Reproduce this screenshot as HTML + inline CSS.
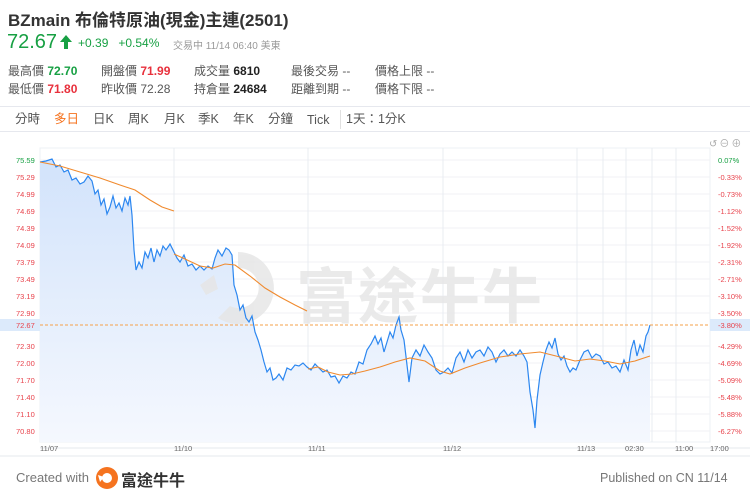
<!DOCTYPE html>
<html><head><meta charset="utf-8"><style>
body{margin:0;width:750px;height:499px;background:#fff;font-family:"Liberation Sans","Noto Sans CJK TC",sans-serif;position:relative;overflow:hidden;color:#333}
.a{position:absolute;white-space:nowrap}
.st{font-size:12px;color:#555}
.st b{font-weight:bold;color:#222}
.g{color:#17a043!important}.r{color:#e8303c!important}
.tab{font-size:12.5px;color:#555;top:110px;line-height:18px}
.yl{position:absolute;left:16px;font-size:7.5px;color:#e8434c}
.yr{position:absolute;left:718px;font-size:7.5px;color:#e8434c}
.xl{position:absolute;top:444px;font-size:7.5px;color:#666}
</style></head><body>
<div class="a" style="left:8px;top:6px;font-size:17px;font-weight:bold;color:#333">BZmain 布倫特原油(現金)主連(2501)</div>
<div class="a" style="left:7px;top:31px;font-size:20px;color:#17a043">72.67</div>
<svg class="a" style="left:60px;top:35px" width="12" height="14"><path d="M6 0 L12 7 H8 V14 H4 V7 H0Z" fill="#17a043"/></svg>
<div class="a" style="left:78px;top:36px;font-size:12px;color:#17a043">+0.39&nbsp;&nbsp; +0.54%</div>
<div class="a" style="left:173px;top:37px;font-size:10px;color:#999">交易中 11/14 06:40 美東</div>
<div class="a st" style="left:8px;top:62px">最高價 <b class="g">72.70</b></div>
<div class="a st" style="left:8px;top:80px">最低價 <b class="r">71.80</b></div>
<div class="a st" style="left:101px;top:62px">開盤價 <b class="r">71.99</b></div>
<div class="a st" style="left:101px;top:80px">昨收價 <b style="color:#555;font-weight:normal">72.28</b></div>
<div class="a st" style="left:194px;top:62px">成交量 <b>6810</b></div>
<div class="a st" style="left:194px;top:80px">持倉量 <b>24684</b></div>
<div class="a st" style="left:291px;top:62px">最後交易 --</div>
<div class="a st" style="left:291px;top:80px">距離到期 --</div>
<div class="a st" style="left:375px;top:62px">價格上限 --</div>
<div class="a st" style="left:375px;top:80px">價格下限 --</div>
<div class="a" style="left:0;top:106px;width:750px;height:1px;background:#e6e8ee"></div>
<div class="a" style="left:0;top:131px;width:750px;height:1px;background:#e6e8ee"></div>
<div class="a tab" style="left:15px">分時</div>
<div class="a tab" style="left:54px;color:#f5731f">多日</div>
<div class="a tab" style="left:93px">日K</div>
<div class="a tab" style="left:128px">周K</div>
<div class="a tab" style="left:164px">月K</div>
<div class="a tab" style="left:198px">季K</div>
<div class="a tab" style="left:233px">年K</div>
<div class="a tab" style="left:268px">分鐘</div>
<div class="a tab" style="left:307px;top:111px">Tick</div>
<div class="a" style="left:340px;top:110px;width:1px;height:19px;background:#e0e0e0"></div>
<div class="a tab" style="left:346px">1天：1分K</div>
<div class="a" style="left:709px;top:135px;font-size:10px;color:#aaa;letter-spacing:2px">↺⊖⊕</div>

<svg class="a" style="left:0;top:0" width="750" height="499">
<defs><linearGradient id="gf" x1="0" y1="0" x2="0" y2="1"><stop offset="0" stop-color="#d2e3fb"/><stop offset="1" stop-color="#f5f8fe"/></linearGradient></defs>
<rect x="40" y="148" width="670" height="294" fill="none" stroke="#edf0f4"/>
<g stroke="#f0f2f5" stroke-width="1">
<path d="M40 160H710M40 177H710M40 194H710M40 211H710M40 228H710M40 245H710M40 262H710M40 279H710M40 296H710M40 313H710M40 346H710M40 363H710M40 380H710M40 397H710M40 414H710M40 431H710"/>
<path d="M174 148V442M308 148V442M443 148V442M577 148V442M603 148V442M626 148V442M652 148V442M676 148V442" stroke="#e8ecf1"/>
</g>
<path d="M40 162L46 161L52 159L56 167L60 165L64 172L68 170L72 180L76 178L80 184L84 182L88 176L92 181L95 194L98 190L101 205L104 199L107 214L110 207L113 196L116 208L119 203L122 211L125 198L128 205L130 196L132 215L134 250L136 270L139 262L142 268L145 252L148 258L151 248L154 262L157 250L160 256L163 246L166 250L170 244L174 252L177 258L180 262L184 255L188 266L192 264L196 270L200 266L204 270L208 266L212 269L215 258L218 250L222 256L226 248L229 250L232 255L234 285L237 295L240 310L243 305L246 318L249 322L252 316L255 332L258 340L261 350L264 362L267 372L270 368L273 380L276 378L279 374L283 380L287 368L291 370L295 365L299 366L303 363L307 367L311 370L315 364L319 368L323 372L327 370L331 377L335 376L339 383L343 376L347 378L351 372L355 374L359 362L363 364L367 350L371 344L375 336L378 344L381 338L384 352L387 342L390 332L393 338L396 325L399 317L401 330L404 340L407 365L409 382L412 358L416 350L420 356L424 345L428 352L432 358L436 370L440 374L444 372L448 368L452 373L456 358L460 352L464 362L468 350L472 358L476 352L480 350L484 356L488 347L492 352L496 362L500 354L504 350L508 356L512 352L516 356L520 350L524 356L527 362L530 392L533 410L535 428L537 400L540 375L543 362L546 350L549 342L552 348L555 338L558 354L561 360L564 356L567 366L570 372L573 368L576 370L580 360L584 352L588 350L592 358L596 354L600 356L604 364L608 362L612 368L616 366L620 372L624 360L628 370L631 350L634 340L637 356L640 345L643 352L646 336L648 332L650 325L650 442L40 442Z" fill="url(#gf)"/>
<g fill="#e6e6e6" opacity="0.85">
<path d="M238 252a36 36 0 1 1 -20 66l12-12a20 20 0 1 0 8-38z" />
<path d="M200 285l14-10 4 14-12 6z"/>
</g>
<text x="296" y="318" font-size="60" fill="#e6e6e6" fill-opacity="0.85" font-family="Noto Sans CJK TC,sans-serif" font-weight="bold" letter-spacing="2">富途牛牛</text>
<path d="M40 162L46 161L52 159L56 167L60 165L64 172L68 170L72 180L76 178L80 184L84 182L88 176L92 181L95 194L98 190L101 205L104 199L107 214L110 207L113 196L116 208L119 203L122 211L125 198L128 205L130 196L132 215L134 250L136 270L139 262L142 268L145 252L148 258L151 248L154 262L157 250L160 256L163 246L166 250L170 244L174 252L177 258L180 262L184 255L188 266L192 264L196 270L200 266L204 270L208 266L212 269L215 258L218 250L222 256L226 248L229 250L232 255L234 285L237 295L240 310L243 305L246 318L249 322L252 316L255 332L258 340L261 350L264 362L267 372L270 368L273 380L276 378L279 374L283 380L287 368L291 370L295 365L299 366L303 363L307 367L311 370L315 364L319 368L323 372L327 370L331 377L335 376L339 383L343 376L347 378L351 372L355 374L359 362L363 364L367 350L371 344L375 336L378 344L381 338L384 352L387 342L390 332L393 338L396 325L399 317L401 330L404 340L407 365L409 382L412 358L416 350L420 356L424 345L428 352L432 358L436 370L440 374L444 372L448 368L452 373L456 358L460 352L464 362L468 350L472 358L476 352L480 350L484 356L488 347L492 352L496 362L500 354L504 350L508 356L512 352L516 356L520 350L524 356L527 362L530 392L533 410L535 428L537 400L540 375L543 362L546 350L549 342L552 348L555 338L558 354L561 360L564 356L567 366L570 372L573 368L576 370L580 360L584 352L588 350L592 358L596 354L600 356L604 364L608 362L612 368L616 366L620 372L624 360L628 370L631 350L634 340L637 356L640 345L643 352L646 336L648 332L650 325" fill="none" stroke="#2c87f0" stroke-width="1.2"/>
<path d="M40 162L60 166L80 172L100 178L120 185L135 190L150 200L162 207L174 211" fill="none" stroke="#f08a2e" stroke-width="1.1"/>
<path d="M174 254L185 259L200 266L213 268L225 264L235 265L250 276L265 288L280 297L295 305L307 311" fill="none" stroke="#f08a2e" stroke-width="1.1"/>
<path d="M308 369L318 367L328 372L340 375L352 374L365 371L380 367L395 362L410 358L425 361L440 371L450 374L465 368L480 363L500 357L520 354L540 352L560 357L575 361L590 359L605 361L620 364L635 361L650 356" fill="none" stroke="#f08a2e" stroke-width="1.1"/>
<path d="M40 325H710" stroke="#f5a04a" stroke-dasharray="3,2"/>
<rect x="0" y="319" width="40" height="12" fill="#dceafb"/>
<rect x="710" y="319" width="40" height="12" fill="#dceafb"/>
<path d="M40 448H750M0 456H750" stroke="#e6e8ee"/>
</svg>
<div class="yl" style="top:156px;color:#17a043">75.59</div>
<div class="yl" style="top:173px">75.29</div><div class="yl" style="top:190px">74.99</div><div class="yl" style="top:207px">74.69</div><div class="yl" style="top:224px">74.39</div><div class="yl" style="top:241px">74.09</div><div class="yl" style="top:258px">73.79</div><div class="yl" style="top:275px">73.49</div><div class="yl" style="top:292px">73.19</div><div class="yl" style="top:309px">72.90</div><div class="yl" style="top:321px">72.67</div><div class="yl" style="top:342px">72.30</div><div class="yl" style="top:359px">72.00</div><div class="yl" style="top:376px">71.70</div><div class="yl" style="top:393px">71.40</div><div class="yl" style="top:410px">71.10</div><div class="yl" style="top:427px">70.80</div>
<div class="yr" style="top:156px;color:#17a043">0.07%</div>
<div class="yr" style="top:173px">-0.33%</div><div class="yr" style="top:190px">-0.73%</div><div class="yr" style="top:207px">-1.12%</div><div class="yr" style="top:224px">-1.52%</div><div class="yr" style="top:241px">-1.92%</div><div class="yr" style="top:258px">-2.31%</div><div class="yr" style="top:275px">-2.71%</div><div class="yr" style="top:292px">-3.10%</div><div class="yr" style="top:309px">-3.50%</div><div class="yr" style="top:321px">-3.80%</div><div class="yr" style="top:342px">-4.29%</div><div class="yr" style="top:359px">-4.69%</div><div class="yr" style="top:376px">-5.09%</div><div class="yr" style="top:393px">-5.48%</div><div class="yr" style="top:410px">-5.88%</div><div class="yr" style="top:427px">-6.27%</div>
<div class="xl" style="left:40px">11/07</div><div class="xl" style="left:174px">11/10</div><div class="xl" style="left:308px">11/11</div><div class="xl" style="left:443px">11/12</div><div class="xl" style="left:577px">11/13</div><div class="xl" style="left:625px">02:30</div><div class="xl" style="left:675px">11:00</div><div class="xl" style="left:710px">17:00</div>
<div class="a" style="left:16px;top:470px;font-size:13px;color:#777">Created with</div>
<svg class="a" style="left:95px;top:466px" width="24" height="24"><circle cx="12" cy="12" r="11" fill="#f5731f"/><circle cx="12" cy="12" r="5" fill="#fff"/><path d="M3 9l6 2-4 5z" fill="#fff"/></svg>
<div class="a" style="left:121px;top:467px;font-size:16px;font-weight:bold;color:#333">富途牛牛</div>
<div class="a" style="left:600px;top:471px;font-size:12.5px;color:#777">Published on CN 11/14</div>
</body></html>
